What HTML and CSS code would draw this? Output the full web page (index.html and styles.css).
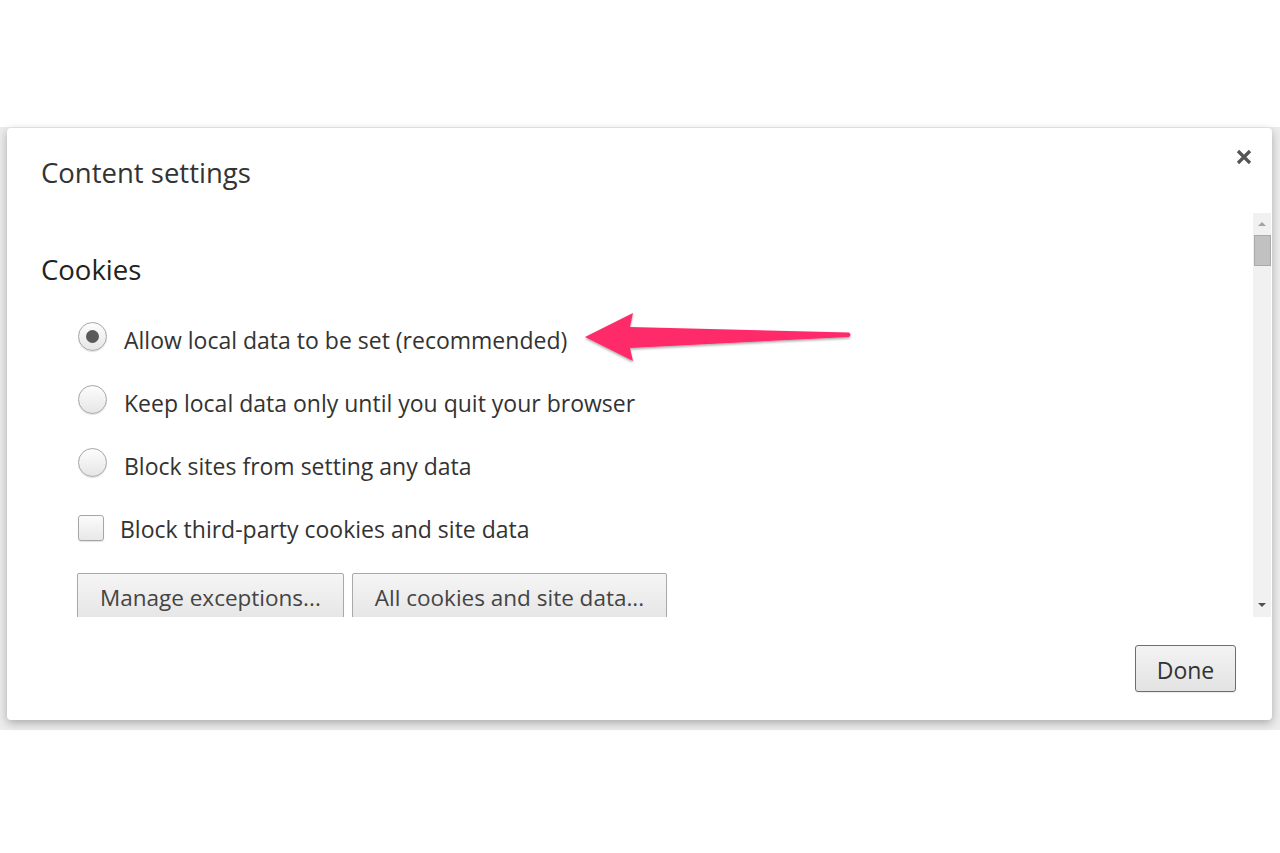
FILE: index.html
```html
<!DOCTYPE html>
<html lang="en">
<head>
<meta charset="utf-8">
<title>Content settings</title>
<link rel="stylesheet" href="styles.css">
</head>
<body>
<div class="page">
  <div class="band">
    <div class="dialog">
      <div class="header">
        <h1 class="title">Content settings</h1>
        <button class="close" aria-label="Close">
          <svg width="16" height="16" viewBox="0 0 16 16"><path d="M2 2 L14 14 M14 2 L2 14" stroke="#555" stroke-width="3.2" stroke-linecap="butt"/></svg>
        </button>
      </div>
      <div class="scroller">
        <div class="content">
          <h2 class="section">Cookies</h2>
          <div class="option">
            <span class="radio checked"></span>
            <span class="label">Allow local data to be set (recommended)</span>
          </div>
          <div class="option">
            <span class="radio"></span>
            <span class="label">Keep local data only until you quit your browser</span>
          </div>
          <div class="option">
            <span class="radio"></span>
            <span class="label">Block sites from setting any data</span>
          </div>
          <div class="option check-row">
            <span class="checkbox"></span>
            <span class="label">Block third-party cookies and site data</span>
          </div>
          <div class="buttons">
            <button class="btn">Manage exceptions...</button>
            <button class="btn">All cookies and site data...</button>
          </div>
        </div>
        <div class="scrollbar">
          <span class="arrow up"></span>
          <span class="thumb"></span>
          <span class="track"></span>
          <span class="arrow down"></span>
        </div>
      </div>
      <div class="footer">
        <button class="btn done">Done</button>
      </div>
      <svg class="annot" width="290" height="70" viewBox="575 305 290 70">
        <defs>
          <filter id="sh" x="-10%" y="-30%" width="120%" height="160%">
            <feDropShadow dx="0" dy="1.5" stdDeviation="1.2" flood-color="#000" flood-opacity="0.35"/>
          </filter>
        </defs>
        <path filter="url(#sh)" fill="#ff2b69" d="M585 337 L633 313 L630 327 L849 332.5 Q852 334.8 849 337 L630 348 L633 361 Z"/>
      </svg>
    </div>
  </div>
</div>
</body>
</html>
```

FILE: styles.css
```css
* { box-sizing: border-box; }
html, body { margin: 0; padding: 0; background: #ffffff; }
body { font-family: "Open Sans", "Noto Sans", sans-serif; color: #333; }

.page {
  width: 1280px;
  height: 853px;
  padding-top: 127px;
}

.band {
  height: 603px;
  background: #ececec;
  padding: 1px 8px 0 7px;
}

.dialog {
  position: relative;
  height: 592px;
  background: #fff;
  border-radius: 4px;
  box-shadow: 0 3px 10px rgba(0,0,0,0.28);
  display: flex;
  flex-direction: column;
}

.header {
  height: 85px;
  display: flex;
  justify-content: space-between;
  align-items: flex-start;
  padding: 0 20px 0 34px;
}

.title {
  margin: 27px 0 0;
  font-size: 27.5px;
  font-weight: 400;
  line-height: 36px;
  color: #333;
}

.close {
  margin-top: 21px;
  width: 16px;
  height: 16px;
  padding: 0;
  border: 0;
  background: none;
  display: block;
}
.close svg { display: block; }

.scroller {
  height: 404px;
  display: flex;
  overflow: hidden;
}

.content {
  flex: 1;
  padding: 39px 0 0 34px;
}

.section {
  margin: 0 0 20px;
  font-size: 27.5px;
  font-weight: 400;
  line-height: 36px;
  color: #222;
}

.option {
  display: flex;
  align-items: center;
  height: 63px;
  padding-left: 37px;
}

.label {
  font-size: 23px;
  color: #333;
  line-height: 30px;
}

.radio {
  width: 29px;
  height: 29px;
  border-radius: 50%;
  border: 1px solid #a6a6a6;
  background: linear-gradient(#fdfdfd, #e6e6e6);
  box-shadow: 0 1px 1px rgba(0,0,0,0.12);
  margin-right: 17px;
  margin-bottom: 6px;
  display: flex;
  align-items: center;
  justify-content: center;
  flex: none;
}
.radio.checked::after {
  content: "";
  width: 13px;
  height: 13px;
  border-radius: 50%;
  background: #5a5a5a;
}

.check-row { padding-left: 37px; }
.checkbox {
  width: 26px;
  height: 26px;
  border-radius: 3px;
  border: 1px solid #a6a6a6;
  background: linear-gradient(#fbfbfb, #e8e8e8);
  box-shadow: 0 1px 1px rgba(0,0,0,0.12);
  margin-right: 16px;
  margin-bottom: 2px;
  flex: none;
}

.buttons {
  display: flex;
  gap: 8px;
  padding-left: 36px;
  margin-top: 13px;
}

.btn {
  font-family: "Open Sans", "Noto Sans", sans-serif;
  font-size: 22.5px;
  color: #444;
  height: 52px;
  padding: 0 22px 4px;
  border: 1px solid #a9a9a9;
  border-radius: 2px;
  background: linear-gradient(#f5f5f5, #e4e4e4);
  box-shadow: 0 1px 1px rgba(0,0,0,0.08);
}

.scrollbar {
  width: 18px;
  margin-right: 1px;
  background: #f1f1f1;
  display: flex;
  flex-direction: column;
  align-items: center;
  flex: none;
}
.arrow {
  width: 0;
  height: 0;
  border-left: 4px solid transparent;
  border-right: 4px solid transparent;
  margin: 9px 0 0;
}
.arrow.up { border-bottom: 4px solid #a3a3a3; }
.arrow.down { border-top: 4px solid #505050; margin: 0 0 10px; }
.thumb {
  width: 17px;
  height: 31px;
  margin-top: 9px;
  background: #c1c1c1;
  border: 1px solid #a9a9a9;
}
.track { flex: 1; }

.footer {
  flex: 1;
  display: flex;
  justify-content: flex-end;
  align-items: flex-start;
  padding: 28px 36px 0 0;
}
.btn.done {
  width: 101px;
  height: 47px;
  padding: 2px 0 0;
  font-size: 23px;
  color: #333;
  border: 1px solid #6e6e6e;
  border-radius: 3px;
  background: linear-gradient(#f3f3f3, #e3e3e3);
}

.annot {
  position: absolute;
  left: 568px;
  top: 177px;
  overflow: visible;
}
```
